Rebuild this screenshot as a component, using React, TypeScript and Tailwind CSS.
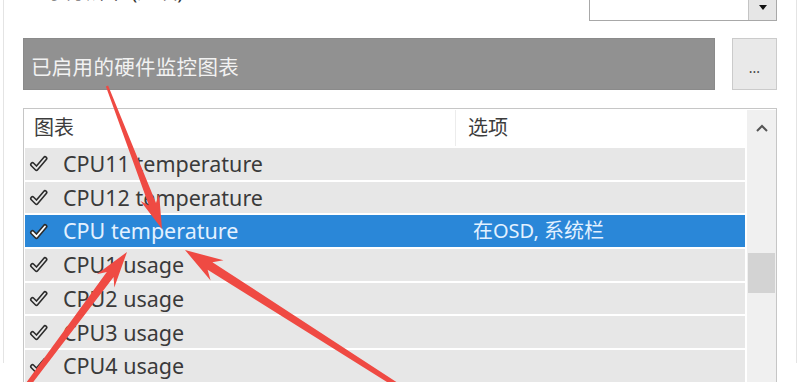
import React from "react";

type Row = { name: string; opt?: string; selected?: boolean };

const rows: Row[] = [
  { name: "CPU11 temperature" },
  { name: "CPU12 temperature" },
  { name: "CPU temperature", opt: "在OSD, 系统栏", selected: true },
  { name: "CPU1 usage" },
  { name: "CPU2 usage" },
  { name: "CPU3 usage" },
  { name: "CPU4 usage" },
];

function Check({ selected }: { selected?: boolean }) {
  return (
    <svg width="20" height="17" viewBox="0 0 20 17" className="shrink-0">
      <path d="M3.5 9.5 L7.5 13.5 L16 3.5" fill="none" stroke="#2c2c2c" strokeWidth="5" strokeLinecap="round" strokeLinejoin="round" />
      <path d="M3.5 9.5 L7.5 13.5 L16 3.5" fill="none" stroke={selected ? "#ffffff" : "#e9e9e9"} strokeWidth="1.8" strokeLinecap="round" strokeLinejoin="round" />
    </svg>
  );
}

// tapered annotation arrow, tail -> tip
function arrowPoints(tx: number, ty: number, px: number, py: number, tailW: number, neckW: number, headL: number, headW: number) {
  const dx = px - tx;
  const dy = py - ty;
  const len = Math.hypot(dx, dy);
  const ux = dx / len;
  const uy = dy / len;
  const nx = -uy;
  const ny = ux;
  const bx = px - ux * headL;
  const by = py - uy * headL;
  const nbx = px - ux * (headL * 0.78);
  const nby = py - uy * (headL * 0.78);
  const pts = [
    [px, py],
    [bx + nx * headW, by + ny * headW],
    [nbx + nx * neckW, nby + ny * neckW],
    [tx + nx * tailW, ty + ny * tailW],
    [tx - nx * tailW, ty - ny * tailW],
    [nbx - nx * neckW, nby - ny * neckW],
    [bx - nx * headW, by - ny * headW],
  ];
  return pts.map((p) => p.map((v) => v.toFixed(1)).join(",")).join(" ");
}

export default function App() {
  return (
    <div className="relative w-[800px] h-[382px] overflow-hidden bg-white font-['Noto_Sans','Noto_Sans_CJK_SC',sans-serif]">
      <div className="h-full mx-[3px] border-x border-[#e4e4e4] px-[19px]">
        {/* top row, scrolled partly out of view */}
        <div className="-mt-[19px] h-[40px] flex items-start justify-between">
          <div className="pl-[3px] pt-[1px] text-[20px] leading-[20px] text-[#333]">显示分辨率 (建议)</div>
          <div className="w-[188px] h-[40px] border border-[#a8a8a8] flex justify-end">
            <div className="w-[28px] h-full bg-[#e6e6e6] border-l border-[#c4c4c4] flex items-end justify-center pb-[10px]">
              <div className="w-0 h-0 border-x-[4px] border-x-transparent border-t-[5px] border-t-[#111]" />
            </div>
          </div>
        </div>

        {/* enabled graphs bar */}
        <div className="mt-[17px] flex items-stretch gap-[17px]">
          <div className="flex-1 h-[52px] bg-[#919191] border border-[#8a8a8a] flex items-center pl-[7px] pt-[6px]">
            <span className="text-[20.5px] text-[#f2f2f2] tracking-[0.3px]">已启用的硬件监控图表</span>
          </div>
          <button className="w-[45px] h-[52px] bg-[#e9e9e9] border border-[#cbcbcb] flex items-center justify-center pt-[8px] text-[14px] leading-none text-[#444]">
            ...
          </button>
        </div>

        {/* graph list */}
        <div className="mt-[18px] h-[300px] border border-[#c6c6c6] flex pl-[1px] pt-[1px]">
          <div className="flex-1 flex flex-col gap-[2px]">
            <div className="h-[36px] flex text-[20px] text-[#3c3c3c] bg-white">
              <div className="w-[431px] border-r border-[#ececec] pl-[9px] flex items-center">图表</div>
              <div className="pl-[12px] flex items-center">选项</div>
            </div>
            {rows.map((r) => (
              <div
                key={r.name}
                className={
                  r.selected
                    ? "h-[31.7px] shrink-0 flex items-center bg-[#2a87d8] text-[#e3f1ff]"
                    : "h-[31.7px] shrink-0 flex items-center bg-[#e7e7e7] text-[#3a3a3a]"
                }
              >
                <div className="w-[431px] flex items-center pl-[4px] gap-[14px]">
                  <Check selected={r.selected} />
                  <span className="text-[21.5px] leading-none">{r.name}</span>
                </div>
                <div className="pl-[17px] text-[20px] leading-none">{r.opt}</div>
              </div>
            ))}
          </div>
          <div className="w-[29px] ml-[2px] bg-[#f0f0f0] relative">
            <svg width="14" height="8" viewBox="0 0 14 8" className="absolute left-[8px] top-[14px]">
              <path d="M2 7 L7 2 L12 7" fill="none" stroke="#555" strokeWidth="2" />
            </svg>
            <div className="absolute left-[1px] right-[1px] top-[143px] h-[40px] bg-[#d3d3d3]" />
          </div>
        </div>
      </div>

      {/* red annotation arrows */}
      <svg className="absolute inset-0 pointer-events-none" width="800" height="382" viewBox="0 0 800 382">
        <polygon points={arrowPoints(107, 86, 162, 229, 1.2, 3.8, 34, 10)} fill="#ef4a43" />
        <polygon points={arrowPoints(24, 390, 127, 252, 2.5, 4.2, 36, 11)} fill="#ef4a43" />
        <polygon points={arrowPoints(398, 386, 185, 250, 2.5, 4.5, 38, 12)} fill="#ef4a43" />
      </svg>
    </div>
  );
}
